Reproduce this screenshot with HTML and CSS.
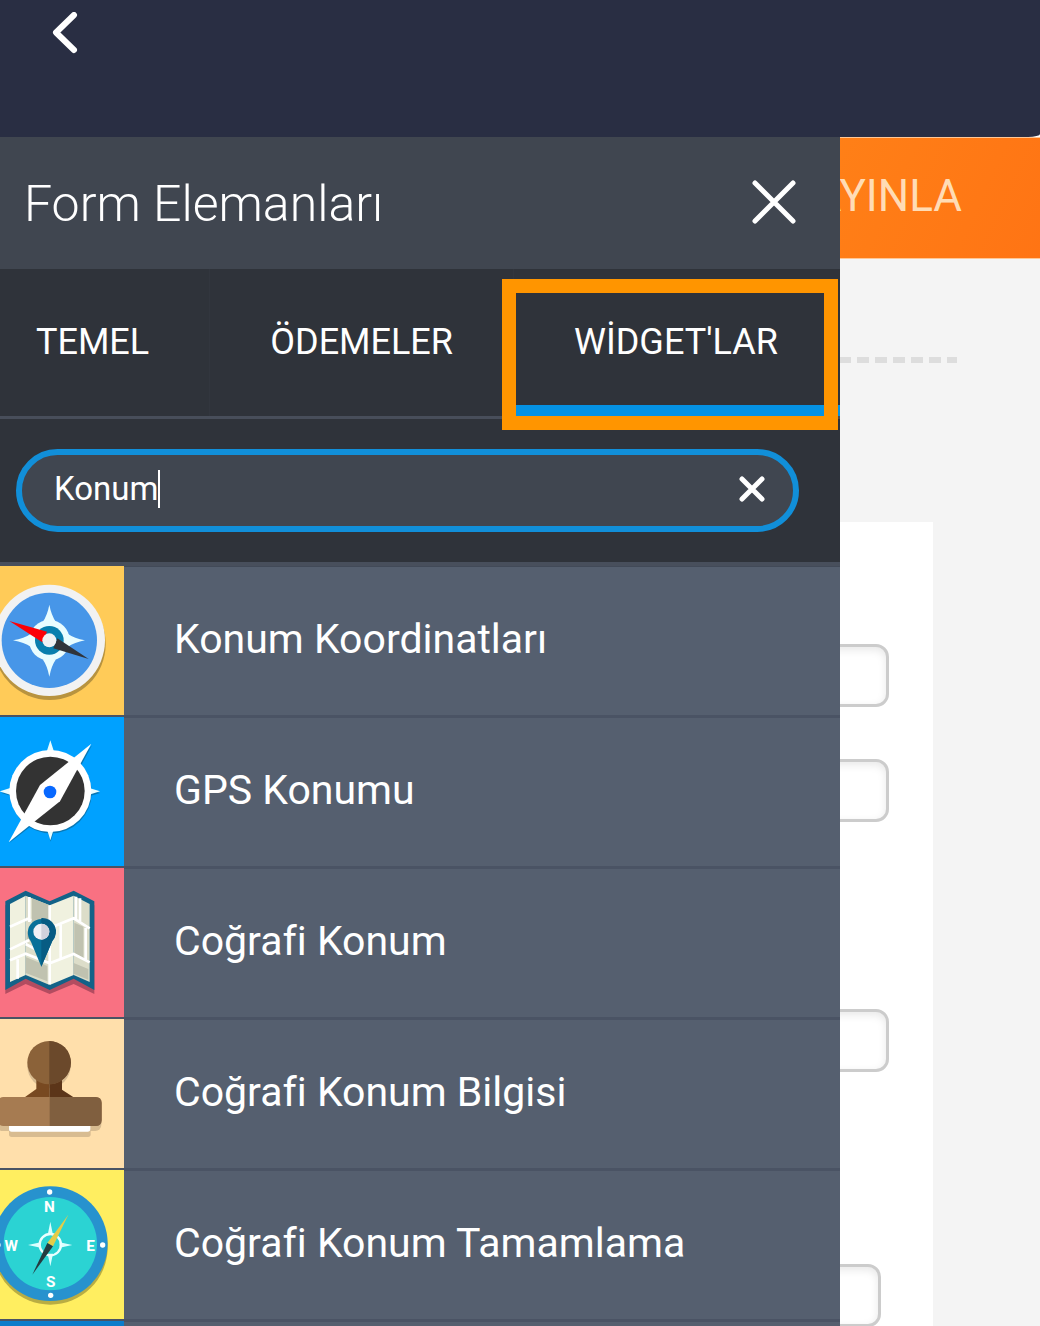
FILE: index.html
```html
<!DOCTYPE html>
<html lang="tr">
<head>
  <meta charset="UTF-8">
  <meta name="viewport" content="width=device-width, initial-scale=1.0">
  <title>Form Elemanları</title>
  <link rel="stylesheet" href="styles.css">
</head>
<body>
  <header class="topbar">
    <button class="icon-btn back" type="button" aria-label="Geri">
      <svg width="26" height="42" viewBox="0 0 26 42"><path d="M22 3 4 20.500l18 17.500"/></svg>
    </button>
  </header>

  <div class="builder">
    <aside class="panel">
      <div class="panel-head">
        <h1>Form Elemanları</h1>
        <button class="icon-btn close" type="button" aria-label="Kapat">
          <svg width="46" height="46" viewBox="0 0 46 46"><path d="M4 3l38 38M42 3 4 41"/></svg>
        </button>
      </div>

      <nav class="tabs">
        <button class="tab" type="button">TEMEL</button>
        <button class="tab" type="button">ÖDEMELER</button>
        <button class="tab active" type="button">WİDGET'LAR<span class="highlight"></span></button>
      </nav>

      <div class="search">
        <label class="search-box">
          <input type="text" value="Konum" aria-label="Ara">
          <span class="caret"></span>
          <button class="icon-btn clear" type="button" aria-label="Temizle">
            <svg width="26" height="26" viewBox="0 0 26 26"><path d="M3 3l20 20M23 3 3 23"/></svg>
          </button>
        </label>
      </div>

      <ul class="widgets">
        <li class="widget">
          <svg class="thumb" viewBox="0 18 372 447">
            <rect y="18" width="372" height="447" fill="#ffcb58"/>
            <circle cx="149" cy="252" r="168" fill="#b8933f"/>
            <circle cx="148" cy="241" r="167" fill="#f2f2f2"/>
            <circle cx="148" cy="241" r="143" fill="#4796e8"/>
            <path d="M148 134q6 32 20 52h-40q14-20 20-52zM148 350q6-32 20-52h-40q14 20 20 52zM39 241q34-6 54-20v40q-20-14-54-20zM255 241q-32-6-52-20v40q20-14 52-20z" fill="#e9fdff"/>
            <circle cx="148" cy="241" r="61" fill="#e9fdff"/>
            <circle cx="148" cy="241" r="43" fill="#087fae"/>
            <path d="M28 183l113 32-14 32z" fill="#fc0007"/>
            <path d="M266 297l-94-62-12 30z" fill="#30343a"/>
            <circle cx="148" cy="241" r="21" fill="#eff2f4"/>
          </svg>
          <a href="#">Konum Koordinatları</a>
        </li>
        <li class="widget">
          <svg class="thumb" viewBox="0 21 372 447">
            <rect y="21" width="372" height="447" fill="#00a1ff"/>
            <g fill="#0877b5">
              <circle cx="153" cy="248" r="122"/>
              <path d="M152 99l12 40h-24zM152 395l12-40h-24zM4 249l40-12v24zM300 249l-40-12v24zM276 106L182 279 28 399z"/>
            </g>
            <path d="M151 91l13 40h-26zM151 391l13-42h-26zM-2 244l42-13v26zM300 244l-42-13v26z" fill="#e9fdff"/>
            <circle cx="151" cy="243" r="123" fill="#fff"/>
            <circle cx="151" cy="243" r="103" fill="#333"/>
            <path d="M274 101L180 274 26 397l94-172z" fill="#fff"/>
            <circle cx="150" cy="246" r="19" fill="#0768ff"/>
          </svg>
          <a href="#">GPS Konumu</a>
        </li>
        <li class="widget">
          <svg class="thumb" viewBox="0 18 372 447">
            <rect y="18" width="372" height="447" fill="#f97182"/>
            <path d="M16 130l61-32 72 32 72-32 62 32v266l-62-30-72 30-72-30-61 30z" fill="#b34c60"/>
            <path d="M16 118l61-32 72 32 72-32 62 32v266l-62-34-72 34-72-34-61 34z" fill="#126288"/>
            <path d="M30 126l47-25v238l-47 21zM149 130l72-29v238l-72 30z" fill="#f0f1df"/>
            <path d="M77 101l72 29v239l-72-30zM221 101l48 25v234l-48-21z" fill="#dcddc9"/>
            <path d="M96 109l53 21v40l-53 12zM223 182l27 12v98l-27-16zM77 285l65 27v46l-65-25zM221 303l44 18v32l-44-18zM80 204l20 40-20-12z" fill="#c0c2b0"/>
            <g fill="none" stroke="#fff" stroke-width="8">
              <path d="M30 194l52-23 12 4M149 198l72-29 48 30M30 262l58-28M30 295l47-20 72 29 72-28 48 25M88 105v75M149 130v237M182 188v106M228 104v68M240 109v69M257 198v100M53 292v58M77 246l30 16"/>
            </g>
            <path d="M124 314L92 237a41 41 0 1 1 65 0z" fill="#087099"/>
            <path d="M124 168a41 41 0 0 1 33 69l-33 77z" fill="#075c83"/>
            <circle cx="124" cy="209" r="24" fill="#f0f0f5"/>
            <path d="M124 185a24 24 0 0 1 0 48z" fill="#d2d2dc"/>
          </svg>
          <a href="#">Coğrafi Konum</a>
        </li>
        <li class="widget">
          <svg class="thumb" viewBox="0 18 372 447">
            <rect y="18" width="372" height="447" fill="#ffdfab"/>
            <g fill="#d8bc91">
              <circle cx="147" cy="160" r="65"/>
              <rect x="-10" y="264" width="314" height="90" rx="18"/>
              <rect x="27" y="340" width="245" height="32" rx="8"/>
            </g>
            <path d="M109 196h39v58H72l37-26z" fill="#784921"/>
            <path d="M148 196h38v34l37 24h-75z" fill="#5b3519"/>
            <circle cx="147" cy="149" r="65" fill="#8b6239"/>
            <path d="M148 84a65 65 0 0 1 0 130z" fill="#6b492b"/>
            <rect x="-8" y="252" width="313" height="87" rx="18" fill="#a67b51"/>
            <path d="M149 252h138q18 0 18 18v51q0 18-18 18H149z" fill="#805f3f"/>
            <path d="M27 339h244v9q0 8-8 8H35q-8 0-8-8z" fill="#fff"/>
          </svg>
          <a href="#">Coğrafi Konum Bilgisi</a>
        </li>
        <li class="widget">
          <svg class="thumb" viewBox="0 15 372 447">
            <rect y="15" width="372" height="447" fill="#ffee60"/>
            <circle cx="151" cy="247" r="172" fill="#b9ad43"/>
            <circle cx="151" cy="236" r="172" fill="#2792ce"/>
            <circle cx="151" cy="236" r="140" fill="#2bd3d3"/>
            <g fill="#fff">
              <circle cx="149" cy="81" r="8"/>
              <circle cx="152" cy="391" r="8"/>
              <circle cx="308" cy="240" r="8"/>
              <circle cx="-6" cy="240" r="8"/>
            </g>
            <g class="compass-letters">
              <text x="148" y="140">N</text>
              <text x="34" y="259">W</text>
              <text x="272" y="259">E</text>
              <text x="152" y="367">S</text>
            </g>
            <path d="M151 170l8 40h-16zM151 304l8-38h-16zM84 240l38-8v16zM217 240l-38-8v16z" fill="#d9ffff"/>
            <circle cx="151" cy="239" r="32" fill="none" stroke="#e9ffff" stroke-width="7"/>
            <path d="M205 149l-63 85 17 10z" fill="#e4cc48"/>
            <path d="M97 329l45-95 17 10z" fill="#253b40"/>
          </svg>
          <a href="#">Coğrafi Konum Tamamlama</a>
        </li>
        <li class="widget">
          <svg class="thumb" viewBox="0 0 372 447"><rect width="372" height="447" fill="#0b7ccb"/></svg>
        </li>
      </ul>
    </aside>

    <main class="preview">
      <button class="publish" type="button">YAYINLA</button>
      <div class="dashes"></div>
      <form class="form-card">
        <input type="text" aria-label="Alan 1">
        <input type="text" aria-label="Alan 2">
        <input class="section-start" type="text" aria-label="Alan 3">
        <input class="section-start short" type="text" aria-label="Alan 4">
      </form>
    </main>
  </div>
</body>
</html>
```
FILE: styles.css
```css
* {
  box-sizing: border-box;
}

body {
  margin: 0;
  height: 100vh;
  display: flex;
  flex-direction: column;
  overflow: hidden;
  background: #fff;
  color: #fff;
  font-family: Roboto, "Liberation Sans", sans-serif;
}

button,
input {
  font-family: inherit;
  color: inherit;
}

.icon-btn {
  display: flex;
  padding: 0;
  border: none;
  background: none;
  cursor: pointer;
}

.icon-btn svg {
  fill: none;
  stroke: #fff;
  stroke-width: 5;
  stroke-linecap: round;
  stroke-linejoin: round;
}

/* top bar */
.topbar {
  flex: none;
  height: 137px;
  padding: 12px 52px;
  background: #292e43;
  border-bottom-right-radius: 12px 3px;
}

.back svg {
  stroke-width: 6;
}

.builder {
  flex: 1;
  min-height: 0;
  display: grid;
  grid-template-columns: minmax(0, 1fr) 200px;
}

/* side panel */
.panel {
  display: flex;
  flex-direction: column;
  min-height: 0;
  background: #2f333a;
}

.panel-head {
  flex: none;
  display: flex;
  align-items: center;
  justify-content: space-between;
  height: 132px;
  padding: 0 43px 0 24px;
  background: #404650;
}

.panel-head h1 {
  margin: 0;
  padding-top: 2px;
  font-size: 50px;
  font-weight: 300;
}

.tabs {
  flex: none;
  display: flex;
  border-bottom: 3px solid #484e5a;
}

.tab {
  position: relative;
  height: 147px;
  padding: 0 60px 2px;
  border: none;
  border-right: 1px solid #32363e;
  background: none;
  font-size: 36px;
  cursor: pointer;
}

.tab:first-child {
  padding-left: 36px;
}

.tab.active {
  flex: 1;
  border-right: none;
  box-shadow: inset 0 -11px #0592e3;
  text-align: left;
}

.highlight {
  position: absolute;
  top: 10px;
  right: 2px;
  bottom: -14px;
  left: -12px;
  border: 14px solid #ff9500;
}

.search {
  flex: none;
  padding: 30px 41px 30px 16px;
  border-bottom: 4px solid #484f5c;
}

.search-box {
  display: flex;
  align-items: center;
  height: 83px;
  padding: 0 28px 4px 32px;
  border: 6px solid #118fd9;
  border-radius: 42px;
  background: #404650;
}

.search-box input {
  field-sizing: content;
  padding: 0;
  border: none;
  outline: none;
  background: none;
  font-size: 33px;
}

.caret {
  width: 2px;
  height: 38px;
  background: #fff;
}

.clear {
  margin-left: auto;
}

/* widget list */
.widgets {
  flex: 1;
  min-height: 0;
  margin: 0;
  padding: 0;
  border-top: 1px solid #424a58;
  list-style: none;
}

.widget {
  display: flex;
  align-items: center;
  height: 151px;
  border-bottom: 3px solid #4a5364;
  background: #555f6f;
}

/* thumbs overlap the divider above them */
.thumb {
  flex: none;
  align-self: flex-start;
  width: 124px;
  height: 149px;
  margin-top: -1px;
}

.widget a {
  padding: 0 50px 4px;
  color: #fff;
  font-size: 41px;
  text-decoration: none;
}

.compass-letters {
  fill: #fff;
  font-family: "Liberation Sans Narrow", Roboto, sans-serif;
  font-size: 46px;
  font-weight: 700;
  text-anchor: middle;
}

/* form behind the panel */
.preview {
  display: flex;
  flex-direction: column;
  align-items: flex-end;
  min-height: 0;
  overflow: hidden;
  background: #f4f4f4;
}

.publish {
  flex: none;
  width: 300px;
  height: 122px;
  padding: 0 78px 4px 0;
  border: solid #ffc795;
  border-width: 1px 0;
  background: linear-gradient(115deg, #ff8418, #ff7414);
  color: #ffdcb5;
  font-size: 44px;
  text-align: right;
  cursor: pointer;
}

.dashes {
  flex: none;
  width: 117px;
  height: 6px;
  margin: 98px 83px 159px 0;
  background: repeating-linear-gradient(90deg, #ddd 0 12px, transparent 12px 18px) -1px 0;
}

.form-card {
  flex: 1 0 auto;
  display: flex;
  flex-direction: column;
  align-items: flex-end;
  gap: 52px;
  width: 400px;
  margin-right: 107px;
  padding: 122px 44px 0 0;
  background: #fff;
}

.form-card input {
  width: 300px;
  height: 63px;
  border: 3px solid #ccc;
  border-radius: 13px;
  background: #fff;
  box-shadow: inset 0 3px 8px #e8e8e8;
  color: #333;
}

.form-card .section-start {
  margin-top: 135px;
}

.form-card .short {
  margin-top: 140px;
  margin-right: 8px;
}
```
